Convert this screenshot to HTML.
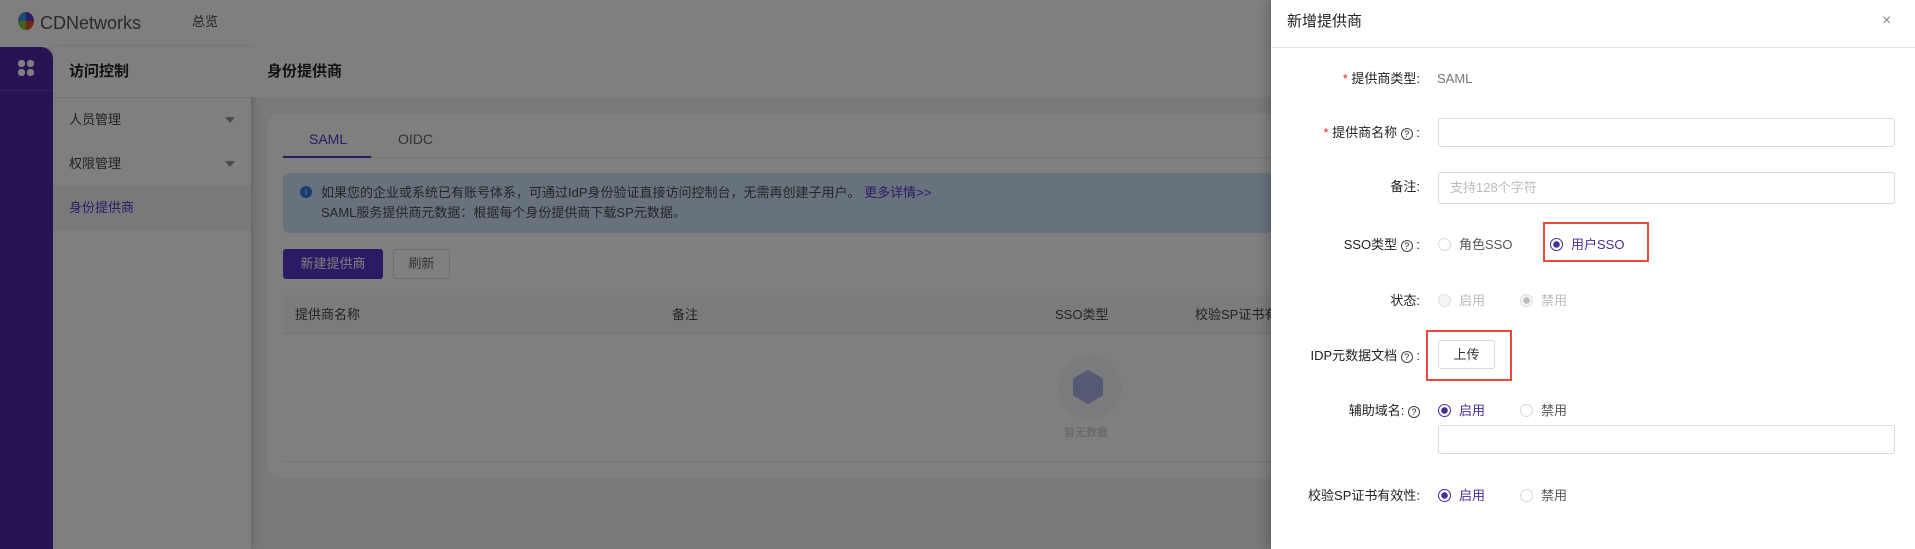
<!DOCTYPE html>
<html><head><meta charset="utf-8"><style>
*{margin:0;padding:0;box-sizing:border-box}
html,body{background:#f2f2f4}
body{width:1915px;height:549px;overflow:hidden;position:relative;font-family:"Liberation Sans","Noto Sans CJK SC",sans-serif;font-size:13px;color:#333}
.a{position:absolute}
.t{position:absolute;white-space:nowrap;line-height:1}
.q{display:inline-block;width:12px;height:12px;border:1px solid #444;border-radius:50%;font-size:9px;line-height:10px;text-align:center}
</style></head><body>
<!-- app (undimmed colors) -->
<div class="a" style="left:0;top:0;width:1915px;height:47px;background:#fff"></div>
<div class="a" style="left:18px;top:12px;width:16px;height:18px;border-radius:50%;background:conic-gradient(#5a3ad0 0 25%,#e0502a 25% 50%,#8ac03a 50% 75%,#3a90e0 75%)"></div>
<div class="t" style="left:40px;top:14px;font-size:18px;color:#555">CDNetworks</div>
<div class="t" style="left:192px;top:15px;font-size:13px;color:#444">总览</div>
<div class="a" style="left:0;top:47px;width:53px;height:502px;background:#5028aa;border-top-right-radius:12px"></div>
<div class="a" style="left:0;top:90px;width:53px;height:1px;background:#6a48c0"></div>
<div class="a" style="left:18px;top:60px;width:7px;height:7px;border-radius:3px;background:#fff"></div>
<div class="a" style="left:27px;top:60px;width:7px;height:7px;border-radius:3px;background:#fff"></div>
<div class="a" style="left:18px;top:69px;width:7px;height:7px;border-radius:3px;background:#fff"></div>
<div class="a" style="left:27px;top:69px;width:7px;height:7px;border-radius:3px;background:#fff"></div>
<div class="a" style="left:53px;top:47px;width:198px;height:502px;background:#fff;box-shadow:2px 0 6px rgba(0,0,0,.15)"></div>
<div class="t" style="left:69px;top:64px;font-size:15px;font-weight:bold;color:#222">访问控制</div>
<div class="a" style="left:53px;top:97px;width:198px;height:1px;background:#eaeaea"></div>
<div class="t" style="left:69px;top:113px;font-size:13px;color:#444">人员管理</div>
<div class="a" style="left:225px;top:117px;border:5px solid transparent;border-top:6px solid #999"></div>
<div class="t" style="left:69px;top:157px;font-size:13px;color:#444">权限管理</div>
<div class="a" style="left:225px;top:161px;border:5px solid transparent;border-top:6px solid #999"></div>
<div class="a" style="left:53px;top:186px;width:198px;height:44px;background:#f3f3f7"></div>
<div class="t" style="left:69px;top:201px;font-size:13px;color:#5a34c8">身份提供商</div>
<div class="a" style="left:251px;top:47px;width:1020px;height:50px;background:#fff"></div>
<div class="t" style="left:267px;top:64px;font-size:15px;font-weight:bold;color:#222">身份提供商</div>
<div class="a" style="left:267px;top:113px;width:1010px;height:365px;background:#fff;border-radius:14px"></div>
<div class="t" style="left:309px;top:132px;font-size:14px;color:#5a34c8">SAML</div>
<div class="t" style="left:398px;top:132px;font-size:14px;color:#666">OIDC</div>
<div class="a" style="left:283px;top:157px;width:990px;height:1px;background:#e8e8e8"></div>
<div class="a" style="left:283px;top:156px;width:88px;height:2px;background:#5a34c8"></div>
<div class="a" style="left:283px;top:173px;width:990px;height:60px;background:#d0e4fa;border-radius:6px"></div>
<div class="a" style="left:300px;top:186px;width:12px;height:12px;border-radius:50%;background:#2f7be0;color:#fff;font-size:9px;text-align:center;line-height:12px">i</div>
<div class="t" style="left:321px;top:186px;font-size:13px;color:#4a4a4a">如果您的企业或系统已有账号体系，可通过IdP身份验证直接访问控制台，无需再创建子用户。 <span style="color:#5a34c8">更多详情&gt;&gt;</span></div>
<div class="t" style="left:321px;top:206px;font-size:13px;color:#4a4a4a">SAML服务提供商元数据：根据每个身份提供商下载SP元数据。</div>
<div class="a" style="left:283px;top:249px;width:100px;height:30px;background:#5a34c8;border-radius:3px;color:#fff;font-size:13px;text-align:center;line-height:30px">新建提供商</div>
<div class="a" style="left:393px;top:249px;width:57px;height:30px;border:1px solid #dcdcdc;border-radius:3px;color:#666;font-size:13px;text-align:center;line-height:28px">刷新</div>
<div class="a" style="left:283px;top:295px;width:990px;height:39px;background:#f6f6f6;border-bottom:1px solid #e6e6e6"></div>
<div class="t" style="left:295px;top:308px;color:#444">提供商名称</div>
<div class="t" style="left:672px;top:308px;color:#444">备注</div>
<div class="t" style="left:1055px;top:308px;color:#444">SSO类型</div>
<div class="t" style="left:1195px;top:308px;color:#444">校验SP证书有</div>
<div class="a" style="left:1058px;top:355px;width:64px;height:64px;border-radius:50%;background:#f4f6fb"></div>
<div class="a" style="left:1073px;top:370px;width:30px;height:34px;background:#aab4e6;clip-path:polygon(50% 0,100% 25%,100% 75%,50% 100%,0 75%,0 25%)"></div>
<div class="t" style="left:1064px;top:428px;font-size:11px;color:#c4c4c4">暂无数据</div>
<div class="a" style="left:283px;top:461px;width:990px;height:1px;background:#e6e6e6"></div>
<!-- mask -->
<div class="a" style="left:0;top:0;width:1915px;height:549px;background:rgba(0,0,0,0.5)"></div>

<!-- drawer -->
<div class="a" style="left:1271px;top:0;width:644px;height:549px;background:#fff;box-shadow:-4px 0 10px rgba(0,0,0,.2)"></div>
<div class="t" style="left:1287px;top:14px;font-size:15px;color:#222">新增提供商</div>
<div class="t" style="left:1882px;top:13px;font-size:16px;color:#888">×</div>
<div class="a" style="left:1271px;top:47px;width:644px;height:1px;background:#e6e6e6"></div>

<div class="t" style="left:1334px;top:72px;color:#222;width:86px;text-align:right"><span style="color:#f5222d">*</span> 提供商类型:</div>
<div class="t" style="left:1437px;top:72px;color:#777">SAML</div>

<div class="t" style="left:1290px;top:126px;color:#222;width:130px;text-align:right"><span style="color:#f5222d">*</span> 提供商名称 <span class="q">?</span> :</div>
<div class="a" style="left:1438px;top:118px;width:457px;height:29px;border:1px solid #d9d9d9;border-radius:3px"></div>

<div class="t" style="left:1334px;top:180px;color:#222;width:86px;text-align:right">备注:</div>
<div class="a" style="left:1438px;top:172px;width:457px;height:32px;border:1px solid #d9d9d9;border-radius:3px"></div>
<div class="t" style="left:1450px;top:181px;color:#bbb">支持128个字符</div>

<div class="t" style="left:1290px;top:238px;color:#222;width:130px;text-align:right">SSO类型 <span class="q">?</span> :</div>
<div class="a" style="left:1438px;top:238px;width:13px;height:13px;border:1px solid #d9d9d9;border-radius:50%"></div>
<div class="t" style="left:1459px;top:238px;color:#555">角色SSO</div>
<div class="a" style="left:1543px;top:222px;width:106px;height:40px;border:2px solid #f0473c"></div>
<div class="a" style="left:1550px;top:238px;width:13px;height:13px;border:1px solid #4a2aa0;border-radius:50%;background:radial-gradient(#4a2aa0 0 3px,#fff 3.5px)"></div>
<div class="t" style="left:1571px;top:238px;color:#4a2aa0">用户SSO</div>

<div class="t" style="left:1334px;top:294px;color:#222;width:86px;text-align:right">状态:</div>
<div class="a" style="left:1438px;top:294px;width:13px;height:13px;border:1px solid #ddd;border-radius:50%;background:#f5f5f5"></div>
<div class="t" style="left:1459px;top:294px;color:#bbb">启用</div>
<div class="a" style="left:1520px;top:294px;width:13px;height:13px;border:1px solid #ddd;border-radius:50%;background:radial-gradient(#bbb 0 3px,#f5f5f5 3.5px)"></div>
<div class="t" style="left:1541px;top:294px;color:#bbb">禁用</div>

<div class="t" style="left:1290px;top:349px;color:#222;width:130px;text-align:right">IDP元数据文档 <span class="q">?</span> :</div>
<div class="a" style="left:1426px;top:330px;width:86px;height:51px;border:2px solid #f0473c"></div>
<div class="a" style="left:1438px;top:340px;width:57px;height:29px;border:1px solid #d9d9d9;border-radius:3px;text-align:center;line-height:27px;color:#333">上传</div>

<div class="t" style="left:1290px;top:404px;color:#222;width:130px;text-align:right">辅助域名: <span class="q">?</span></div>
<div class="a" style="left:1438px;top:404px;width:13px;height:13px;border:1px solid #4a2aa0;border-radius:50%;background:radial-gradient(#4a2aa0 0 3px,#fff 3.5px)"></div>
<div class="t" style="left:1459px;top:404px;color:#4a2aa0">启用</div>
<div class="a" style="left:1520px;top:404px;width:13px;height:13px;border:1px solid #d9d9d9;border-radius:50%"></div>
<div class="t" style="left:1541px;top:404px;color:#555">禁用</div>
<div class="a" style="left:1438px;top:425px;width:457px;height:29px;border:1px solid #d9d9d9;border-radius:3px"></div>

<div class="t" style="left:1290px;top:489px;color:#222;width:130px;text-align:right">校验SP证书有效性:</div>
<div class="a" style="left:1438px;top:489px;width:13px;height:13px;border:1px solid #4a2aa0;border-radius:50%;background:radial-gradient(#4a2aa0 0 3px,#fff 3.5px)"></div>
<div class="t" style="left:1459px;top:489px;color:#4a2aa0">启用</div>
<div class="a" style="left:1520px;top:489px;width:13px;height:13px;border:1px solid #d9d9d9;border-radius:50%"></div>
<div class="t" style="left:1541px;top:489px;color:#555">禁用</div>
</body></html>
